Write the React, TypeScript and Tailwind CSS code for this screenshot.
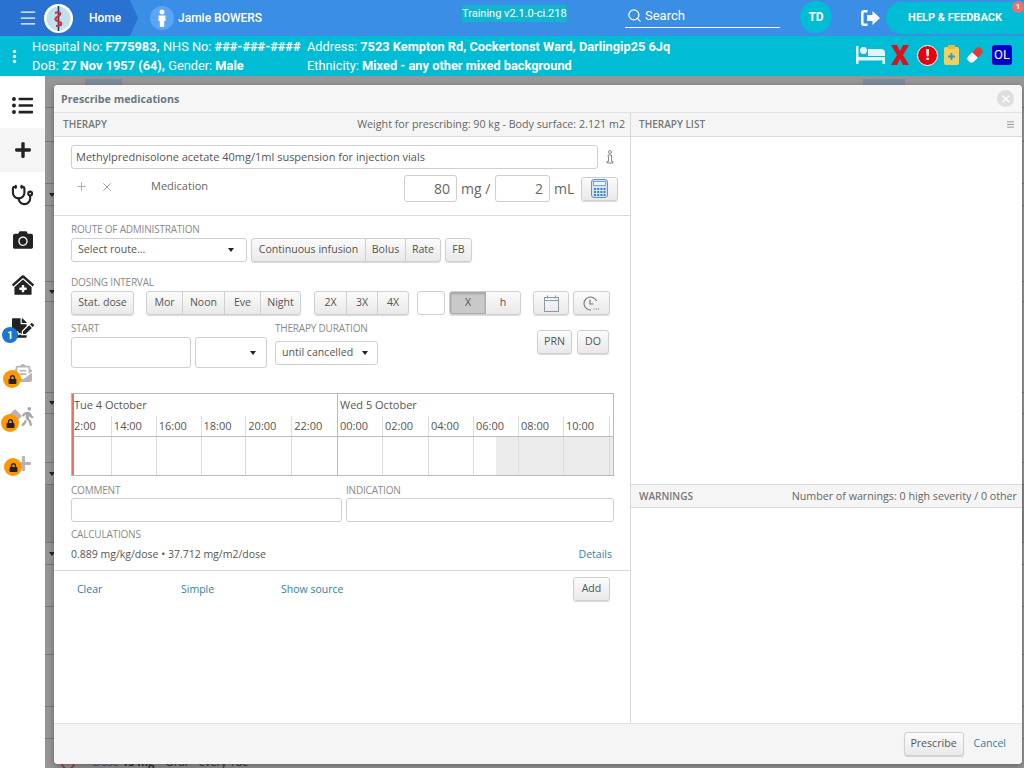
import { Menu, Search, EllipsisVertical, Plus, X, Stethoscope } from 'lucide-react';
import { FaListUl, FaPlus, FaCamera, FaClinicMedical, FaFileSignature, FaEnvelopeOpenText, FaWalking, FaLock } from 'react-icons/fa';
import type { ReactNode } from 'react';

const btn = 'h-6 flex items-center justify-center border border-[#cfcfcf] rounded-[3px] bg-gradient-to-b from-[#fbfbfb] to-[#e9e9e9] shadow-[0_1px_1px_rgba(0,0,0,0.15)] text-[10.6px] text-[#555]';
const groupBtn = 'h-full flex items-center justify-center border-r border-[#cfcfcf] last:border-r-0 text-[10.6px] text-[#555]';
const group = 'h-6 flex border border-[#cfcfcf] rounded-[3px] bg-gradient-to-b from-[#fbfbfb] to-[#e9e9e9] shadow-[0_1px_1px_rgba(0,0,0,0.15)] overflow-hidden';
const field = 'border border-[#cfcfcf] rounded-[3px] bg-white';
const label = 'text-[10px] leading-3 text-[#8a8a8a] uppercase tracking-[-0.2px]';
const link = 'text-[10.5px] text-[#2f7fa8]';

const hours1 = [
  { t: '2:00', w: 'w-[38px]', p: 'pl-0' },
  { t: '14:00', w: 'w-[45px]', p: 'pl-[2px]' },
  { t: '16:00', w: 'w-[45px]', p: 'pl-[2px]' },
  { t: '18:00', w: 'w-[45px]', p: 'pl-[2px]' },
  { t: '20:00', w: 'w-[46px]', p: 'pl-[2px]' },
  { t: '22:00', w: 'w-[45px]', p: 'pl-[2px]' },
];
const hours2 = [
  { t: '00:00', w: 'w-[45px]' },
  { t: '02:00', w: 'w-[46px]' },
  { t: '04:00', w: 'w-[45px]' },
  { t: '06:00', w: 'w-[45px]' },
  { t: '08:00', w: 'w-[45px]' },
  { t: '10:00', w: 'w-[46px]' },
  { t: '12:00', w: 'w-[45px]' },
];

// rows of the page behind the dialog
const backRows = [
  { h: 'h-[34px]', caret: false },
  { h: 'h-[42px]', caret: false },
  { h: 'h-[22px]', caret: true },
  { h: 'h-[76px]', caret: false },
  { h: 'h-[20px]', caret: true },
  { h: 'h-[91px]', caret: false },
  { h: 'h-[21px]', caret: true },
  { h: 'h-[49px]', caret: false },
  { h: 'h-[22px]', caret: true },
  { h: 'h-[58px] bg-[#8a8a8a]', caret: false },
  { h: 'h-[22px]', caret: true },
  { h: 'h-[42px]', caret: false },
  { h: 'h-[48px]', caret: false },
  { h: 'h-[52px]', caret: false },
  { h: 'h-[32px]', caret: false },
];

function Caret() {
  return <span className="w-0 h-0 border-x-[3.5px] border-x-transparent border-t-[4px] border-t-[#222]" />;
}

function Locked({ children, left }: { children: ReactNode; left: string }) {
  return (
    <div className="relative h-11 flex items-center justify-center text-[#b5b5b5]">
      {children}
      <span className={`absolute top-[18px] ${left} w-[18px] h-[18px] rounded-full bg-[#ff9800] flex items-center justify-center`}>
        <FaLock size={9} className="text-[#222]" />
      </span>
    </div>
  );
}

function Sidebar() {
  return (
    <div className="w-[45px] shrink-0 bg-white flex flex-col text-[#222]">
      <div className="h-[52px] pt-[7px] flex items-center justify-center"><FaListUl size={21} /></div>
      <div className="h-[44px] bg-[#f5f5f5] flex items-center justify-center"><FaPlus size={18} /></div>
      <div className="h-[46px] flex items-center justify-center"><Stethoscope size={23} strokeWidth={2.2} /></div>
      <div className="h-[44px] flex items-center justify-center"><FaCamera size={20} /></div>
      <div className="h-[45px] flex items-center justify-center"><FaClinicMedical size={22} /></div>
      <div className="relative h-[45px] flex items-center justify-center">
        <FaFileSignature size={22} className="ml-[1px] -mt-[3px]" />
        <span className="absolute top-[20px] left-[2px] w-4 h-4 rounded-full bg-[#1976d2] text-white text-[10px] font-bold flex items-center justify-center font-['Roboto',sans-serif]">1</span>
      </div>
      <Locked left="left-[3px]"><FaEnvelopeOpenText size={18} className="ml-[1px] -mt-[2px]" /></Locked>
      <Locked left="left-[1px]">
        <svg width="14" height="14" viewBox="0 0 14 14" fill="#b5b5b5" className="-mr-[4px] -mt-[4px]"><path d="M7 0l7 7-7 7-7-7z" /></svg>
        <FaWalking size={19} className="-mt-[4px] text-[#a8a8a8]" />
      </Locked>
      <Locked left="left-[4px]"><FaPlus size={17} className="ml-[2px] mt-[2px]" /></Locked>
    </div>
  );
}

function Backdrop() {
  return (
    <div className="flex-1 bg-[#969696] flex flex-col">
      <div className="h-[32px] shrink-0 border-b border-[#777] flex items-start text-[#555]">
        <div className="ml-[40px] mt-[3px] w-[37px] h-[10px] bg-[#7c8b99]" />
        <div className="ml-[741px] mt-[3px] w-[42px] h-[10px] bg-[#7c8b99]" />
      </div>
      {backRows.map((r, i) => (
        <div key={i} className={`${r.h} shrink-0 border-b border-[#777] flex items-center pl-[4px]`}>
          {r.caret && <Caret />}
        </div>
      ))}
      <div className="flex-1 pt-[17px] pl-[16px] flex items-start text-[11px] leading-3 text-[#333] font-['Open_Sans',sans-serif] overflow-hidden">
        <svg width="14" height="14" viewBox="0 0 14 14" fill="none" stroke="#a33" strokeWidth="1.500"><circle cx="7" cy="7" r="6" /></svg>
        <span className="ml-[18px] whitespace-nowrap"><span className="text-[#44527a]">Dose</span> <b>15 mg</b> – Oral – every Tue</span>
      </div>
    </div>
  );
}

function TherapyPanel() {
  return (
    <div className="w-[577px] h-full border-r border-[#d9d9d9] flex flex-col">
      <div className="h-[24px] shrink-0 bg-[#f5f5f5] border-b border-[#d9d9d9] flex items-center justify-between pl-[9px] pr-[5px]">
        <span className="text-[10px] font-semibold text-[#777]">THERAPY</span>
        <span className="text-[10.7px] text-[#666]">Weight for prescribing: 90 kg - Body surface: 2.121 m2</span>
      </div>

      <div className="h-[79px] shrink-0 border-b border-[#d9d9d9] pl-[17px] pt-[8px] flex flex-col">
        <div className="flex items-center">
          <div className={`${field} w-[527px] h-6 px-[4px] flex items-center text-[11px] text-[#555]`}>Methylprednisolone acetate 40mg/1ml suspension for injection vials</div>
          <svg className="ml-[8px]" width="8" height="14" viewBox="0 0 8 14" fill="none" stroke="#888" strokeWidth="1">
            <circle cx="4" cy="2" r="1.500" />
            <path d="M2 5h3.500v6.500H7V13H1v-1.500h1.500V6.500H2z" />
          </svg>
        </div>
        <div className="flex items-center mt-[6px]">
          <Plus size={13} strokeWidth={1.5} className="ml-[4px] -mt-[4px] text-[#999]" />
          <X size={14} strokeWidth={1.5} className="ml-[12px] -mt-[4px] text-[#999]" />
          <span className="ml-[37px] -mt-[4px] text-[11px] text-[#666]">Medication</span>
          <div className={`${field} ml-[196px] w-[53px] h-[27px] flex items-center justify-end pr-[6px] text-[14px] text-[#666]`}>80</div>
          <span className="ml-[4px] w-[34px] text-[14px] text-[#666]">mg /</span>
          <div className={`${field} w-[55px] h-[27px] flex items-center justify-end pr-[6px] text-[14px] text-[#666]`}>2</div>
          <span className="ml-[4px] w-[27px] text-[14px] text-[#666]">mL</span>
          <div className={`${btn} w-[37px]`}>
            <svg width="17" height="19" viewBox="0 0 17 19">
              <rect x="0.500" y="0.500" width="16" height="18" rx="2.500" fill="#d5e5f6" stroke="#5b93cf" />
              <rect x="2.500" y="2.500" width="12" height="4" fill="#eef5fc" stroke="#5b93cf" strokeWidth="0.800" />
              <path d="M3 9h2v2H3zM6.200 9h2v2h-2zM9.400 9h2v2h-2zM12.500 9h2v2h-2zM3 12h2v2H3zM6.200 12h2v2h-2zM9.400 12h2v2h-2zM12.500 12h2v2h-2zM3 15h2v2H3zM6.200 15h2v2h-2zM9.400 15h2v2h-2zM12.500 15h2v2h-2z" fill="#3f7fc4" />
            </svg>
          </div>
        </div>
      </div>

      <div className="flex-1 pl-[17px] pt-[7px] flex flex-col">
        <div className={label}>Route of administration</div>
        <div className="flex mt-[3px] gap-[4px]">
          <div className={`${field} w-[176px] h-6 pl-[6px] pr-[12px] flex items-center justify-between text-[10.6px] text-[#555]`}>Select route...<Caret /></div>
          <div className={`${group} w-[190px]`}>
            <div className={`${groupBtn} w-[114px]`}>Continuous infusion</div>
            <div className={`${groupBtn} w-[40px]`}>Bolus</div>
            <div className={`${groupBtn} flex-1`}>Rate</div>
          </div>
          <div className={`${btn} w-[27px]`}>FB</div>
        </div>

        <div className={`${label} mt-[14px]`}>Dosing interval</div>
        <div className="flex mt-[3px]">
          <div className={`${btn} w-[63px]`}>Stat. dose</div>
          <div className={`${group} ml-[12px] w-[155px]`}>
            <div className={`${groupBtn} w-[36px]`}>Mor</div>
            <div className={`${groupBtn} w-[42px]`}>Noon</div>
            <div className={`${groupBtn} w-[36px]`}>Eve</div>
            <div className={`${groupBtn} flex-1`}>Night</div>
          </div>
          <div className={`${group} ml-[13px] w-[95px]`}>
            <div className={`${groupBtn} w-[32px]`}>2X</div>
            <div className={`${groupBtn} w-[31px]`}>3X</div>
            <div className={`${groupBtn} flex-1`}>4X</div>
          </div>
          <div className={`${field} ml-[8px] w-[28px] h-6`} />
          <div className={`${group} ml-[4px] w-[72px]`}>
            <div className="h-full w-[36px] flex items-center justify-center bg-[#c9c9c9] border border-[#aaa] shadow-[inset_0_1px_2px_rgba(0,0,0,0.2)] text-[10.6px] text-[#555]">X</div>
            <div className={`${groupBtn} flex-1`}>h</div>
          </div>
          <div className={`${btn} ml-[12px] w-[36px]`}>
            <svg width="15" height="17" viewBox="0 0 15 17" fill="none" stroke="#8a9aa0">
              <rect x="0.500" y="2.500" width="14" height="14" />
              <path d="M0.500 5.500h14M3.500 0.500v3M11.500 0.500v3" />
            </svg>
          </div>
          <div className={`${btn} ml-[4px] w-[37px]`}>
            <svg width="17" height="15" viewBox="0 0 17 15" fill="none" stroke="#777" strokeWidth="1.100">
              <path d="M13.500 5A6.500 6.500 0 1 0 8 14" />
              <path d="M7 3.500V8h3.500" />
              <path d="M10.500 13h1M12.800 13h1M15 13h1" />
            </svg>
          </div>
        </div>

        <div className="flex mt-[7px] h-[72px] shrink-0">
          <div>
            <div className={label}>Start</div>
            <div className="flex gap-[4px] mt-[3px]">
              <div className={`${field} w-[120px] h-[31px]`} />
              <div className={`${field} w-[72px] h-[31px] pr-[10px] flex items-center justify-end`}><Caret /></div>
            </div>
          </div>
          <div className="ml-[8px]">
            <div className={label}>Therapy duration</div>
            <div className={`${field} mt-[7px] w-[103px] h-6 pl-[6px] pr-[9px] flex items-center justify-between text-[10.6px] text-[#555]`}>until cancelled<Caret /></div>
          </div>
          <div className="flex ml-[159px] mt-[8px] gap-[5px]">
            <div className={`${btn} w-[35px]`}>PRN</div>
            <div className={`${btn} w-[32px]`}>DO</div>
          </div>
        </div>

        <div className="w-[543px] h-[83px] shrink-0 mt-[-1px] border border-[#bbb] flex text-[11px] text-[#555]">
          <div className="w-[266px] h-full border-r border-[#bbb] border-l-[2px] border-l-[#e57368] flex flex-col">
            <div className="h-[22px] flex items-center">Tue 4 October</div>
            <div className="h-[21px] flex border-b border-[#bbb]">
              {hours1.map((h) => (
                <div key={h.t} className={`${h.w} ${h.p} border-r border-[#ddd] last:border-r-0 flex items-center`}>{h.t}</div>
              ))}
            </div>
            <div className="flex-1 flex">
              {hours1.map((h) => (
                <div key={h.t} className={`${h.w} border-r border-[#ddd] last:border-r-0`} />
              ))}
            </div>
          </div>
          <div className="flex-1 h-full flex flex-col overflow-hidden">
            <div className="h-[22px] flex items-center pl-[2px]">Wed 5 October</div>
            <div className="h-[21px] flex border-b border-[#bbb]">
              {hours2.map((h) => (
                <div key={h.t} className={`${h.w} shrink-0 pl-[2px] border-r border-[#ddd] flex items-center`}>{h.t}</div>
              ))}
            </div>
            <div className="flex-1 flex relative">
              <div className="absolute left-[158px] right-0 top-0 bottom-0 bg-[#ebebeb]" />
              {hours2.map((h) => (
                <div key={h.t} className={`${h.w} shrink-0 relative border-r border-[#ddd]`} />
              ))}
            </div>
          </div>
        </div>

        <div className="flex gap-[4px] mt-[8px]">
          <div>
            <div className={label}>Comment</div>
            <div className={`${field} w-[271px] h-6 mt-[2px]`} />
          </div>
          <div>
            <div className={label}>Indication</div>
            <div className={`${field} w-[268px] h-6 mt-[2px]`} />
          </div>
        </div>

        <div className={`${label} mt-[6px]`}>Calculations</div>
        <div className="w-[541px] flex justify-between items-center mt-[7px] text-[10.5px] text-[#555]">
          <span>0.889 mg/kg/dose • 37.712 mg/m2/dose</span>
          <span className={link}>Details</span>
        </div>
      </div>

      <div className="h-[153px] shrink-0 border-t border-[#d9d9d9] flex items-start pt-[6px] pl-[23px]">
        <div className="w-[104px] h-6 mt-[1px] flex items-center"><span className={link}>Clear</span></div>
        <div className="w-[100px] h-6 mt-[1px] flex items-center"><span className={link}>Simple</span></div>
        <div className="w-[292px] h-6 mt-[1px] flex items-center"><span className={link}>Show source</span></div>
        <div className={`${btn} w-[37px]`}>Add</div>
      </div>
    </div>
  );
}

function ListPanel() {
  return (
    <div className="flex-1 h-full flex flex-col">
      <div className="h-[24px] shrink-0 bg-[#f5f5f5] border-b border-[#d9d9d9] flex items-center justify-between pl-[8px] pr-[7px]">
        <span className="text-[10px] font-semibold text-[#777]">THERAPY LIST</span>
        <Menu size={9} className="text-[#777]" />
      </div>
      <div className="h-[347px] shrink-0" />
      <div className="h-[24px] shrink-0 bg-[#f5f5f5] border-y border-[#d9d9d9] flex items-center justify-between pl-[8px] pr-[5px]">
        <span className="text-[10px] font-semibold text-[#777]">WARNINGS</span>
        <span className="text-[10.7px] text-[#666]">Number of warnings: 0 high severity / 0 other</span>
      </div>
    </div>
  );
}

export default function App() {
  return (
    <div className="w-[1024px] h-[768px] overflow-hidden relative flex flex-col font-['Roboto',sans-serif]">
      {/* top bar */}
      <div className="h-[36px] shrink-0 bg-[#3a8ee6] flex items-center text-white">
        <div className="w-[138px] h-full bg-[#2a72d2] [clip-path:polygon(0_0,130px_0,138px_50%,130px_100%,0_100%)] flex items-center">
          <Menu size={20} strokeWidth={1.5} className="ml-[18px]" />
          <div className="ml-[6px] w-[29px] h-[29px] rounded-full bg-white flex items-center justify-center">
            <svg width="27" height="27" viewBox="0 0 27 27">
              <circle cx="13.500" cy="13.500" r="12" fill="#bfe0ee" />
              <path d="M13.500 1v25" stroke="#1c3f70" strokeWidth="1.600" />
              <path d="M10 8c5-2 7 1 3.500 3S9 15 13.500 16.500 17 21 11 21" fill="none" stroke="#d0313a" strokeWidth="2.200" />
            </svg>
          </div>
          <span className="ml-[16px] text-[12px] font-medium">Home</span>
        </div>
        <div className="ml-[12px] w-[24px] h-[24px] rounded-full bg-[#5aa5f5] flex items-center justify-center">
          <svg width="10" height="18" viewBox="0 0 10 18" fill="white">
            <circle cx="5" cy="3" r="2.500" />
            <path d="M1.500 6.500h7V12H7.200v6H2.800v-6H1.500z" />
          </svg>
        </div>
        <span className="ml-[4px] w-[284px] text-[12px] font-medium">Jamie BOWERS</span>
        <span className="w-[165px] -mt-[10px] self-center leading-4">
          <span className="bg-[#12b5d0] text-[11px] py-[2px]">Training v2.1.0-ci.218</span>
        </span>
        <div className="w-[155px] h-[24px] ml-[-2px] mb-[8px] self-end border-b border-white flex items-center pl-[2px] text-[13px]">
          <Search size={15} strokeWidth={2} className="mr-[3px]" />Search
        </div>
        <div className="ml-[20px] -mt-[2px] w-[32px] h-[32px] rounded-full bg-[#00bcd4] flex items-center justify-center text-[12px] font-bold">TD</div>
        <svg className="ml-[29px]" width="19" height="16" viewBox="0 0 19 16" fill="white">
          <path d="M6.500 0H3Q0 0 0 3v10q0 3 3 3h3.500v-2.500H3.500q-1 0-1-1v-9q0-1 1-1h3z" />
          <path d="M11.500 1 19 8l-7.500 7v-4H6V5h5.500z" />
        </svg>
        <div className="relative ml-[6px] w-[138px] h-[32px] pt-[1px] rounded-l-[16px] bg-[#00bcd4] flex items-center justify-center text-[11px] font-bold">
          HELP &amp; FEEDBACK
          <span className="absolute -top-[1px] right-0 w-3 h-3 rounded-full bg-[#e57373] text-[7px] flex items-center justify-center">1</span>
        </div>
      </div>

      {/* patient banner */}
      <div className="h-[40px] shrink-0 bg-[#00bcd4] text-white flex items-center text-[12.8px] font-normal">
        <EllipsisVertical size={17} strokeWidth={3} className="ml-[6px] shrink-0" />
        <div className="ml-[9px] w-[275px] flex flex-col leading-[19px]">
          <span className="whitespace-nowrap">Hospital No: <b className="font-bold">F775983,</b> NHS No: <b className="font-bold">###-###-####</b></span>
          <span className="whitespace-nowrap">DoB: <b className="font-bold">27 Nov 1957 (64),</b> Gender: <b className="font-bold">Male</b></span>
        </div>
        <div className="flex flex-col leading-[19px]">
          <span className="whitespace-nowrap">Address: <b className="font-bold">7523 Kempton Rd, Cockertonst Ward, Darlingip25 6Jq</b></span>
          <span className="whitespace-nowrap">Ethnicity: <b className="font-bold">Mixed - any other mixed background</b></span>
        </div>
        <div className="ml-auto mr-[12px] -mt-[2px] flex items-center">
          <svg width="29" height="20" viewBox="0 0 29 20" fill="#e1f5fb">
            <path d="M0 1h2.500v11H29v7h-2.500v-3.500h-24V19H0z" />
            <circle cx="7.500" cy="5.500" r="3.500" />
            <path d="M12 4h13q4 0 4 4v3H12z" />
          </svg>
          <svg className="ml-[6px]" width="18" height="20" viewBox="0 0 18 20" fill="#d8141c">
            <path d="M0 0h6l3 6 3-6h6l-6 10 6 10h-6l-3-6-3 6H0l6-10z" />
          </svg>
          <span className="ml-[8px] w-[21px] h-[21px] rounded-full bg-[#e8000c] border border-white text-white text-[15px] font-black flex items-center justify-center">!</span>
          <svg className="ml-[6px]" width="15" height="20" viewBox="0 0 15 20">
            <rect x="0" y="2" width="15" height="18" rx="2" fill="#f2cf63" />
            <rect x="4" y="0" width="7" height="4" fill="#e3b94c" />
            <path d="M7.500 8v7M4 11.500h7" stroke="#2a9bc4" strokeWidth="1.800" />
          </svg>
          <svg className="ml-[6px]" width="20" height="20" viewBox="0 0 20 20">
            <g transform="rotate(45 10 10)">
              <path d="M6 10V5a4 4 0 0 1 8 0v5z" fill="#e53935" />
              <path d="M6 10h8v5a4 4 0 0 1-8 0z" fill="#fafafa" />
            </g>
          </svg>
          <span className="ml-[7px] w-[20px] h-[20px] rounded-[3px] bg-[#0000c8] text-white text-[13px] flex items-center justify-center">OL</span>
        </div>
      </div>

      {/* body */}
      <div className="flex-1 flex min-h-0">
        <Sidebar />
        <Backdrop />
      </div>

      {/* modal */}
      <div className="absolute left-[54px] top-[85px] w-[968px] h-[679px] bg-white rounded-[4px] shadow-[0_2px_6px_rgba(0,0,0,0.35)] flex flex-col overflow-hidden font-['Open_Sans',sans-serif]">
        <div className="h-[28px] shrink-0 bg-[#f7f7f7] border-b border-[#e2e2e2] flex items-center justify-between pl-[7px] pr-[8px]">
          <span className="text-[10.7px] mt-[1px] font-bold text-[#6b7780]">Prescribe medications</span>
          <span className="w-[17px] h-[17px] rounded-full bg-[#dedede] flex items-center justify-center"><X size={12} strokeWidth={3} className="text-white" /></span>
        </div>
        <div className="h-[610px] shrink-0 flex">
          <TherapyPanel />
          <ListPanel />
        </div>
        <div className="flex-1 bg-[#f5f5f5] border-t border-[#e2e2e2] flex items-center justify-end pr-[16px]">
          <div className={`${btn} w-[60px]`}>Prescribe</div>
          <span className={`${link} ml-[10px]`}>Cancel</span>
        </div>
      </div>
    </div>
  );
}
